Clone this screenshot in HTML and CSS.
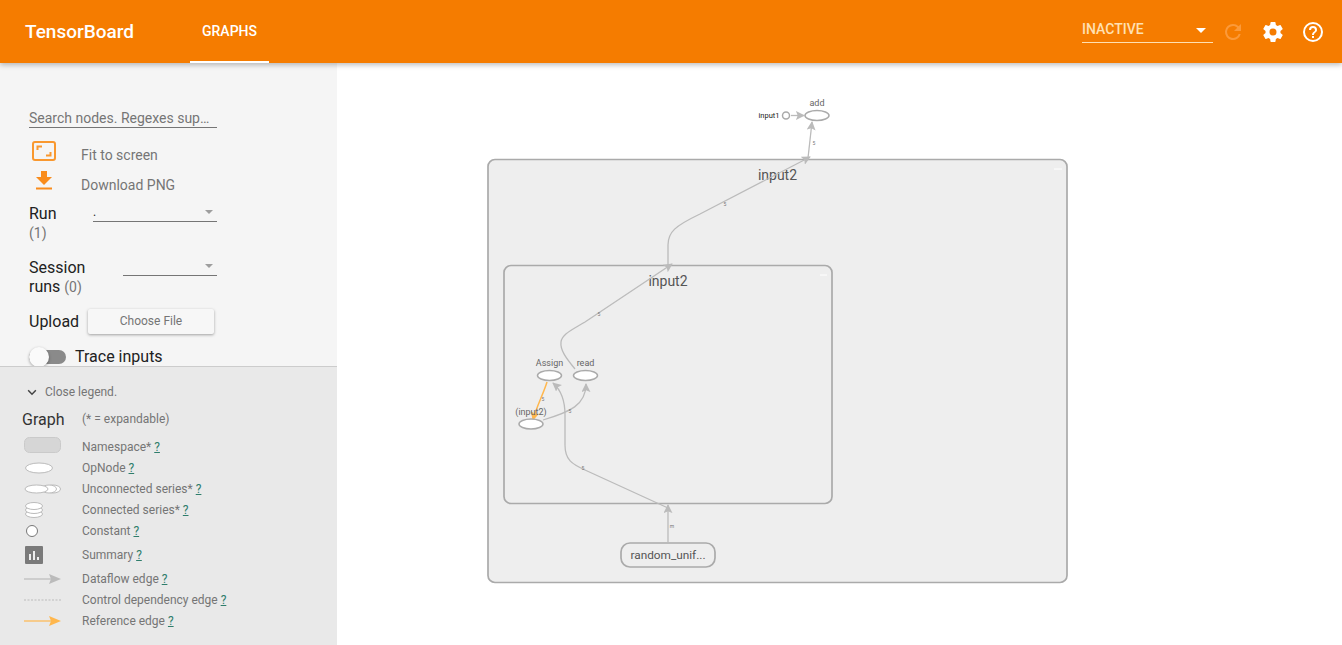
FILE: index.html
```html
<!DOCTYPE html>
<html lang="en">
<head>
<meta charset="utf-8">
<title>TensorBoard</title>
<link rel="stylesheet" href="styles.css">
</head>
<body>
<header class="toolbar">
  <div class="brand">TensorBoard</div>
  <div class="tab">GRAPHS</div>
  <div class="spacer"></div>
  <div class="run-select"><span>INACTIVE</span><i class="caret low"></i></div>
  <svg class="tool-icon reload" viewBox="0 0 24 24"><path d="M17.65 6.35A7.96 7.96 0 0 0 12 4a8 8 0 1 0 7.73 10h-2.08A6 6 0 1 1 12 6c1.66 0 3.14.69 4.22 1.78L13 11h7V4z"/></svg>
  <svg class="tool-icon" viewBox="0 0 24 24"><path d="M19.43 12.98c.04-.32.07-.64.07-.98s-.03-.66-.07-.98l2.11-1.65a.5.5 0 0 0 .12-.64l-2-3.46a.5.5 0 0 0-.61-.22l-2.49 1a7.3 7.3 0 0 0-1.69-.98l-.38-2.65A.49.49 0 0 0 14 2h-4a.49.49 0 0 0-.49.42l-.38 2.65c-.61.25-1.17.59-1.69.98l-2.49-1a.5.5 0 0 0-.61.22l-2 3.46a.49.49 0 0 0 .12.64l2.11 1.65c-.04.32-.07.65-.07.98s.03.66.07.98l-2.11 1.65a.5.5 0 0 0-.12.64l2 3.46c.12.22.39.3.61.22l2.49-1c.52.4 1.08.73 1.69.98l.38 2.65c.03.24.24.42.49.42h4c.25 0 .46-.18.49-.42l.38-2.65c.61-.25 1.17-.59 1.69-.98l2.49 1c.23.09.49 0 .61-.22l2-3.46a.5.5 0 0 0-.12-.64zM12 15.5a3.5 3.5 0 1 1 0-7 3.5 3.5 0 0 1 0 7z"/></svg>
  <svg class="tool-icon" viewBox="0 0 24 24"><path d="M11 18h2v-2h-2v2zm1-16a10 10 0 1 0 0 20 10 10 0 0 0 0-20zm0 18a8 8 0 1 1 0-16 8 8 0 0 1 0 16zm0-14a4 4 0 0 0-4 4h2a2 2 0 1 1 4 0c0 2-3 1.75-3 5h2c0-2.25 3-2.5 3-5a4 4 0 0 0-4-4z"/></svg>
</header>

<div class="main">
  <aside class="sidebar">
    <div class="controls">
      <div class="search">Search nodes. Regexes sup…</div>
      <div class="action first">
        <svg class="action-icon" viewBox="0 0 24 20"><rect x="1" y="1" width="22" height="18" rx="2" fill="none" stroke="#f9982f" stroke-width="2"/><path d="M4.500 9V4.500h5.500v2H6.500V9zM19.500 11v4.500H14v-2h3.500V11z" fill="#f9982f"/></svg>
        <span>Fit to screen</span>
      </div>
      <div class="action">
        <svg class="action-icon" viewBox="0 0 24 20"><path d="M9 0h6v6h5l-8 8-8-8h5zM4 16.500h16v2H4z" fill="#f98c1c"/></svg>
        <span>Download PNG</span>
      </div>
      <div class="field run">
        <div class="field-label">Run<br><small>(1)</small></div>
        <div class="dropdown run-drop"><span class="dot">.</span><i class="caret grey"></i></div>
      </div>
      <div class="field session">
        <div class="field-label">Session<br>runs <small>(0)</small></div>
        <div class="dropdown session-drop"><i class="caret grey"></i></div>
      </div>
      <div class="field upload">
        <div class="field-label">Upload</div>
        <div class="file-btn">Choose File</div>
      </div>
      <div class="trace">
        <div class="toggle"><i class="knob"></i></div>
        <span>Trace inputs</span>
      </div>
    </div>

    <div class="legend">
      <div class="legend-toggle">
        <svg viewBox="0 0 12 8"><path d="M1.400 1.400 6 6l4.600-4.600" fill="none" stroke="#444" stroke-width="1.800"/></svg>
        <span>Close legend.</span>
      </div>
      <div class="legend-title"><span class="graph-word">Graph</span><span>(* = expandable)</span></div>
      <div class="legend-row r21">
        <svg class="raised" viewBox="0 0 38 16"><rect x="0.500" y="0.500" width="36" height="15" rx="5" fill="#d6d6d6" stroke="#cacaca"/></svg>
        <span>Namespace* <u>?</u></span>
      </div>
      <div class="legend-row r21">
        <svg viewBox="0 0 38 16"><ellipse cx="15" cy="8" rx="13.500" ry="5" fill="#fff" stroke="#bbb"/></svg>
        <span>OpNode <u>?</u></span>
      </div>
      <div class="legend-row r21">
        <svg viewBox="0 0 38 16"><ellipse cx="29" cy="8" rx="7.500" ry="4" fill="#fff" stroke="#bbb"/><ellipse cx="25" cy="8" rx="7.500" ry="4" fill="#fff" stroke="#bbb"/><ellipse cx="12.500" cy="8" rx="11.500" ry="4" fill="#fff" stroke="#bbb"/></svg>
        <span>Unconnected series* <u>?</u></span>
      </div>
      <div class="legend-row r21">
        <svg viewBox="0 0 38 16"><ellipse cx="10" cy="12" rx="8.500" ry="3.500" fill="#fff" stroke="#bbb"/><ellipse cx="10" cy="8" rx="8.500" ry="3.500" fill="#fff" stroke="#bbb"/><ellipse cx="10" cy="4" rx="8.500" ry="3.500" fill="#fff" stroke="#bbb"/></svg>
        <span>Connected series* <u>?</u></span>
      </div>
      <div class="legend-row r21">
        <svg viewBox="0 0 38 16"><circle cx="8" cy="8" r="5.500" fill="#fff" stroke="#777"/></svg>
        <span>Constant <u>?</u></span>
      </div>
      <div class="legend-row r27">
        <svg class="tall" viewBox="0 0 38 18"><rect x="1" width="18" height="18" rx="1" fill="#7a7a7a"/><path d="M5 8h2v6H5zM9 5h2v9H9zM13 11h2v3h-2z" fill="#eee"/></svg>
        <span>Summary <u>?</u></span>
      </div>
      <div class="legend-row r21">
        <svg viewBox="0 0 38 16"><path d="M0 8h28" stroke="#bbb" stroke-width="1.200"/><path d="M25 3l12 5-12 5 2-5z" fill="#bbb"/></svg>
        <span>Dataflow edge <u>?</u></span>
      </div>
      <div class="legend-row r21">
        <svg viewBox="0 0 38 16"><path d="M0 8h37" stroke="#bbb" stroke-width="1.200" stroke-dasharray="2 1.500"/></svg>
        <span>Control dependency edge <u>?</u></span>
      </div>
      <div class="legend-row r21">
        <svg viewBox="0 0 38 16"><path d="M0 8h28" stroke="#ffb74d" stroke-width="1.200"/><path d="M25 3l12 5-12 5 2-5z" fill="#ffb74d"/></svg>
        <span>Reference edge <u>?</u></span>
      </div>
    </div>
  </aside>

  <section class="canvas">
    <svg class="graph" width="1005" height="582" viewBox="337 63 1005 582">
      <defs>
        <marker id="arrow" viewBox="0 0 10 10" refX="9" refY="5" markerWidth="9" markerHeight="9" markerUnits="userSpaceOnUse" orient="auto"><path d="M0 0l10 5-10 5 2-5z" fill="#bbb"/></marker>
        <marker id="arrow-ref" viewBox="0 0 10 10" refX="9" refY="5" markerWidth="9" markerHeight="9" markerUnits="userSpaceOnUse" orient="auto"><path d="M0 0l10 5-10 5 2-5z" fill="#ffb74d"/></marker>
      </defs>

      <rect class="group" x="488" y="159.500" width="579" height="423" rx="7"/>
      <path class="collapse" d="M1054 169h8"/>
      <rect class="group" x="504" y="265.500" width="328" height="238" rx="7"/>
      <path class="collapse" d="M820 275h7"/>

      <text class="group-label" x="777.500" y="180">input2</text>
      <text class="group-label" x="668" y="286">input2</text>

      <path class="edge" d="M668 542V505" marker-end="url(#arrow)"/>
      <path class="edge" d="M668 508L585 470C572 464 565 460 565 445V415C565 400 561 390 553 383" marker-end="url(#arrow)"/>
      <path class="edge" d="M575 369C566 358 560 350 561 342C562 334 572 330 585 322L672 264" marker-end="url(#arrow)"/>
      <path class="edge" d="M668 265V245C668 232 675 226 700 214L810 157" marker-end="url(#arrow)"/>
      <path class="edge" d="M808 158L812 122" marker-end="url(#arrow)"/>
      <path class="edge" d="M543 420C570 412 586 405 586 384" marker-end="url(#arrow)"/>
      <path class="edge" d="M791 115.500H804" marker-end="url(#arrow)"/>
      <path class="edge-ref" d="M547 382C543 395 537 405 533 420" marker-end="url(#arrow-ref)"/>

      <ellipse class="node" cx="549.500" cy="375.500" rx="12" ry="5"/>
      <ellipse class="node" cx="585.500" cy="375.500" rx="12" ry="5"/>
      <ellipse class="node" cx="531" cy="424" rx="12" ry="5"/>
      <ellipse class="node" cx="817" cy="115.500" rx="12" ry="5"/>
      <circle class="node" cx="786" cy="115.500" r="3.500"/>
      <rect class="node-group" x="621" y="543" width="94" height="24" rx="9"/>

      <text class="node-label" x="549.500" y="366">Assign</text>
      <text class="node-label" x="585.500" y="366">read</text>
      <text class="node-label" x="531" y="415">(input2)</text>
      <text class="node-label" x="817" y="106">add</text>
      <text class="input-label" x="779.500" y="118">input1</text>
      <text class="random-label" x="668" y="559">random_unif...</text>

      <text class="shape" x="725" y="206">5</text>
      <text class="shape" x="599" y="316">5</text>
      <text class="shape" x="570" y="413">5</text>
      <text class="shape" x="543" y="401">5</text>
      <text class="shape" x="583" y="470">5</text>
      <text class="shape" x="672" y="528">m</text>
      <text class="shape" x="814" y="145">5</text>
    </svg>
  </section>
</div>
</body>
</html>
```
FILE: styles.css
```css
* {
  box-sizing: border-box;
}
html, body {
  margin: 0;
  height: 100%;
  overflow: hidden;
}
body {
  font-family: Roboto, "Liberation Sans", sans-serif;
  background: #fff;
  color: #212121;
}

.toolbar {
  display: flex;
  align-items: center;
  height: 63px;
  padding-left: 25px;
  padding-right: 17px;
  background: #f57c00;
  color: #fff;
  box-shadow: 0 2px 5px rgba(0, 0, 0, .26);
  position: relative;
  z-index: 2;
}
.brand {
  width: 165px;
  font-size: 19px;
  font-weight: 500;
}
.tab {
  display: flex;
  align-items: center;
  justify-content: center;
  width: 79px;
  height: 63px;
  font-size: 14px;
  font-weight: 500;
  border-bottom: 2px solid #fff;
}
.spacer {
  flex: 1;
}
.run-select {
  display: flex;
  align-items: center;
  justify-content: space-between;
  width: 131px;
  height: 28px;
  margin-top: -5px;
  padding-right: 7px;
  border-bottom: 1px solid #ffe0b2;
  color: #ffe0b2;
  font-size: 14px;
  font-weight: 500;
}
.caret {
  width: 0;
  height: 0;
  border-left: 5px solid transparent;
  border-right: 5px solid transparent;
  border-top: 5px solid #fff;
}
.caret.low {
  margin-top: 3px;
}
.caret.grey {
  border-left-width: 4px;
  border-right-width: 4px;
  border-top: 4px solid #9e9e9e;
}
.tool-icon {
  width: 24px;
  height: 24px;
  margin-left: 16px;
  fill: #fff;
}
.tool-icon.reload {
  margin-left: 8px;
  fill: #fb9a3a;
}

.main {
  display: flex;
  height: 582px;
}
.sidebar {
  display: flex;
  flex-direction: column;
  width: 337px;
  background: #f5f5f5;
  flex-shrink: 0;
}
.controls {
  height: 304px;
  padding: 46px 120px 0 29px;
  overflow: hidden;
  border-bottom: 1px solid #ccc;
}
.search {
  width: 188px;
  height: 19px;
  font-size: 14px;
  line-height: 18px;
  color: #757575;
  border-bottom: 1px solid #757575;
  white-space: nowrap;
}
.action {
  display: flex;
  align-items: center;
  height: 30px;
  font-size: 14px;
  color: #757575;
}
.action.first {
  margin-top: 12px;
}
.action-icon {
  width: 24px;
  height: 20px;
  margin-left: 3px;
  margin-right: 25px;
  margin-top: -8px;
  flex-shrink: 0;
}
.field {
  display: flex;
  font-size: 16px;
  line-height: 19px;
}
.field small {
  font-size: 14px;
  color: #757575;
}
.field.run {
  height: 54px;
  margin-top: 4px;
}
.field.session {
  height: 41px;
}
.field.upload {
  align-items: center;
  margin-top: 10px;
}
.field.run .field-label {
  width: 64px;
}
.field.session .field-label {
  width: 94px;
}
.field.upload .field-label {
  width: 59px;
}
.dropdown {
  display: flex;
  align-items: center;
  justify-content: space-between;
  height: 17px;
  margin-top: 1px;
  padding-right: 4px;
  padding-bottom: 3px;
  border-bottom: 1px solid #757575;
  font-size: 12px;
}
.run-drop {
  width: 124px;
}
.session-drop {
  width: 94px;
  justify-content: flex-end;
}
.dot {
  margin-top: 2px;
}
.file-btn {
  width: 126px;
  height: 25px;
  line-height: 25px;
  text-align: center;
  font-size: 12px;
  color: #757575;
  background: #f7f7f7;
  border-radius: 2px;
  box-shadow: 0 1px 3px rgba(0, 0, 0, .35);
}
.trace {
  display: flex;
  align-items: center;
  gap: 9px;
  margin-top: 13px;
  font-size: 16px;
}
.toggle {
  position: relative;
  width: 37px;
  height: 14px;
  border-radius: 7px;
  background: #8a8a8a;
}
.knob {
  position: absolute;
  left: 0;
  top: -3px;
  width: 20px;
  height: 20px;
  border-radius: 50%;
  background: #fafafa;
  box-shadow: 0 1px 3px rgba(0, 0, 0, .35);
}

.legend {
  flex: 1;
  padding: 18px 0 0 22px;
  background: #e9e9e9;
  font-size: 12px;
  color: #757575;
}
.legend-toggle {
  display: flex;
  align-items: center;
  gap: 8px;
  height: 14px;
  padding-left: 5px;
}
.legend-toggle svg {
  width: 10px;
  height: 7px;
}
.legend-title {
  display: flex;
  align-items: center;
  height: 20px;
  margin-top: 10px;
  margin-bottom: 7px;
}
.graph-word {
  width: 60px;
  font-size: 16px;
  color: #333;
}
.legend-row {
  display: flex;
  align-items: center;
}
.legend-row.r21 {
  height: 21px;
}
.legend-row.r27 {
  height: 27px;
}
.legend-row svg {
  width: 38px;
  height: 16px;
  margin-left: 2px;
  margin-right: 20px;
  flex-shrink: 0;
}
.legend-row svg.tall {
  height: 18px;
}
.legend-row svg.raised {
  margin-top: -4px;
}
.legend-row u {
  color: #2e7d6b;
}

.canvas {
  flex: 1;
  background: #fff;
}
.graph {
  display: block;
}
.group {
  fill: #eee;
  stroke: #aaa;
  stroke-width: 1.7;
}
.collapse {
  stroke: #fff;
  stroke-width: 1;
}
.group-label {
  font-size: 14px;
  fill: #555;
  text-anchor: middle;
}
.edge {
  fill: none;
  stroke: #bbb;
  stroke-width: 1.3;
}
.edge-ref {
  fill: none;
  stroke: #ffb74d;
  stroke-width: 1.5;
}
.node {
  fill: #fff;
  stroke: #aaa;
  stroke-width: 1.5;
}
.node-group {
  fill: #eee;
  stroke: #aaa;
  stroke-width: 1.7;
}
.node-label {
  font-size: 9px;
  fill: #666;
  text-anchor: middle;
}
.input-label {
  font-size: 7.5px;
  fill: #222;
  text-anchor: end;
}
.random-label {
  font-size: 11.8px;
  fill: #555;
  text-anchor: middle;
}
.shape {
  font-size: 5px;
  fill: #777;
  text-anchor: middle;
}
```
